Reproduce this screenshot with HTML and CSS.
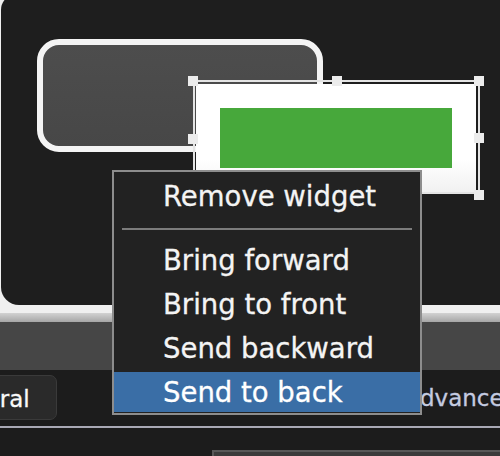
FILE: index.html
```html
<!DOCTYPE html>
<html lang="en">
<head>
  <meta charset="UTF-8" />
  <meta name="viewport" content="width=device-width, initial-scale=1.0"/>
  <title>Widget editor</title>
<link rel="stylesheet" href="styles.css">
</head>
<body>
<div class="editor">
  <div class="frame">
    <div class="canvas">
      <div class="widget box-widget"></div>
      <div class="selection">
        <div class="widget bar-widget">
          <div class="bar"></div>
        </div>
        <span class="handle h-tl"></span>
        <span class="handle h-tm"></span>
        <span class="handle h-tr"></span>
        <span class="handle h-ml"></span>
        <span class="handle h-mr"></span>
        <span class="handle h-bl"></span>
        <span class="handle h-bm"></span>
        <span class="handle h-br"></span>
      </div>
    </div>
  </div>
  <div class="frame-shade"></div>
  <div class="toolbar"></div>

  <div class="tabs">
    <div class="tab active">General</div>
    <div class="tab">Advanced</div>
  </div>
  <div class="rule"></div>
  <div class="content">
    <div class="field"></div>
  </div>

  <ul class="menu">
    <li class="item">Remove widget</li>
    <li class="separator"></li>
    <li class="item">Bring forward</li>
    <li class="item">Bring to front</li>
    <li class="item">Send backward</li>
    <li class="item selected">Send to back</li>
  </ul>
</div>
</body>
</html>
```

FILE: styles.css
```css
body {
  margin: 0;
  background-color: #1c1c1c;
  font-family: "DejaVu Sans", sans-serif;
  height: 456px;
  overflow: hidden;
}

.editor {
  position: relative;
  width: 500px;
  height: 456px;
  overflow: hidden;
}

/* canvas area */
.frame {
  display: flow-root;
  background-color: #f0f0f0;
  height: 313px;
  padding-left: 1px;
}

.canvas {
  position: relative;
  width: 530px;
  height: 311px;
  margin-top: -6px;
  background-color: #1e1e1e;
  border-radius: 16px 0 0 18px;
}

.frame-shade {
  height: 9px;
  background: linear-gradient(#d2d2d2, #a6a6a6);
}

.toolbar {
  height: 48px;
  background-color: #464646;
}

.widget {
  box-sizing: border-box;
}

.box-widget {
  position: absolute;
  left: 36px;
  top: 45px;
  width: 286px;
  height: 113px;
  border: 6px solid #f4f4f4;
  border-radius: 22px;
  background: linear-gradient(#4d4d4d, #474747);
}

.selection {
  position: absolute;
  left: 192px;
  top: 86px;
  width: 287px;
  height: 114px;
  box-sizing: border-box;
  border: 2px solid #e4e4e4;
  padding: 2px 1px 0 1px;
}

.bar-widget {
  width: 280px;
  height: 108px;
  padding: 24px;
  background: linear-gradient(#ffffff 70%, #f1f1f1);
}

.bar {
  height: 60px;
  background-color: #47a83b;
}

.handle {
  position: absolute;
  width: 10px;
  height: 10px;
  background-color: #ececec;
}

.h-tl { left: -7px; top: -6px; }
.h-tm { left: 137px; top: -6px; }
.h-tr { left: 279px; top: -6px; }
.h-ml { left: -7px; top: 52px; }
.h-mr { left: 279px; top: 51px; }
.h-bl { left: -7px; top: 108px; }
.h-bm { left: 137px; top: 108px; }
.h-br { left: 279px; top: 108px; }

/* inspector tabs */
.tabs {
  display: flex;
  height: 56px;
  padding-top: 5px;
  box-sizing: border-box;
}

.tab {
  height: 45px;
  box-sizing: border-box;
  padding: 2px 26px 0;
  line-height: 43px;
  font-size: 23px;
  color: #c4cbe0;
  white-space: nowrap;
  -webkit-text-stroke: 0.3px currentColor;
}

.tab.active {
  margin-left: -88px;
  color: #fafafa;
  background-color: #2a2a2a;
  border: 1px solid #3a3a3a;
  border-radius: 7px;
}

.tab + .tab {
  margin-left: 322px;
}

.rule {
  height: 2px;
  background-color: #a9a9b5;
}

.content {
  padding: 22px 0 0 212px;
}

.field {
  height: 20px;
  border: 2px solid #585858;
  border-right: none;
  background-color: #3b3b3b;
}

/* context menu */
.menu {
  position: absolute;
  left: 112px;
  top: 170px;
  width: 310px;
  box-sizing: border-box;
  margin: 0;
  padding: 4px 0 1px;
  list-style: none;
  background-color: #222222;
  border: 2px solid #8d8d8d;
}

.item {
  height: 40px;
  line-height: 40px;
  padding-left: 49px;
  font-size: 27.5px;
  color: #f4f4f4;
  white-space: nowrap;
  -webkit-text-stroke: 0.3px currentColor;
}

.item + .item {
  margin-top: 4px;
}

.separator {
  height: 2px;
  margin: 12px 8px 10px;
  background-color: #7c7c7c;
}

.item.selected {
  background-color: #3a6ea6;
  color: #ffffff;
}
```
